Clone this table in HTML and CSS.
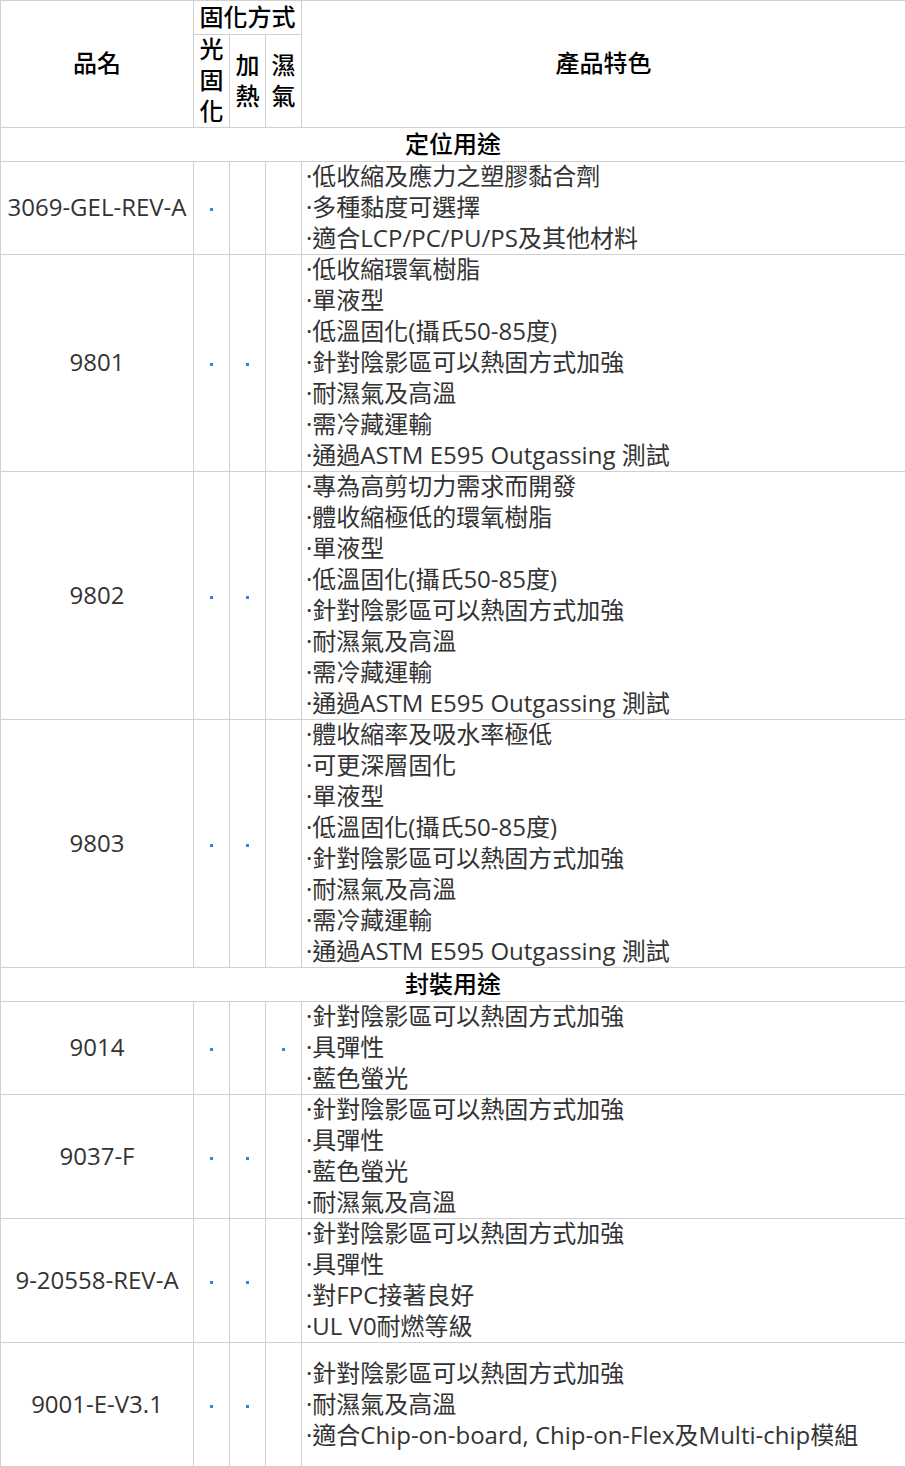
FILE: index.html
```html
<!DOCTYPE html>
<html lang="zh-Hant">

<head>
    <meta charset="UTF-8">
    <meta name="viewport" content="width=device-width, initial-scale=1.0">
    <title>產品特色</title>
    <link rel="stylesheet" href="styles.css">
</head>

<body>
    <table class="spec-table">
        <colgroup>
            <col class="col-name">
            <col class="col-cure">
            <col class="col-cure">
            <col class="col-cure">
            <col class="col-feature">
        </colgroup>
        <thead>
            <tr>
                <th rowspan="2"><div class="lines">品名</div></th>
                <th colspan="3" class="single-row"><div class="lines">固化方式</div></th>
                <th rowspan="2"><div class="lines">產品特色</div></th>
            </tr>
            <tr>
                <th><div class="lines">光固化</div></th>
                <th><div class="lines">加熱</div></th>
                <th><div class="lines">濕氣</div></th>
            </tr>
        </thead>
        <tbody>
            <tr>
                <th colspan="5" class="single-row"><div class="lines">定位用途</div></th>
            </tr>
            <tr>
                <td class="name"><div class="lines">3069-GEL-REV-A</div></td>
                <td class="mark"><div class="lines"><span class="dot"></span></div></td>
                <td class="mark"></td>
                <td class="mark"></td>
                <td class="feature"><div class="lines">
                    ·低收縮及應力之塑膠黏合劑<br>
                    ·多種黏度可選擇<br>
                    ·適合LCP/PC/PU/PS及其他材料
                </div></td>
            </tr>
            <tr>
                <td class="name"><div class="lines">9801</div></td>
                <td class="mark"><div class="lines"><span class="dot"></span></div></td>
                <td class="mark"><div class="lines"><span class="dot"></span></div></td>
                <td class="mark"></td>
                <td class="feature"><div class="lines">
                    ·低收縮環氧樹脂<br>
                    ·單液型<br>
                    ·低溫固化(攝氏50-85度)<br>
                    ·針對陰影區可以熱固方式加強<br>
                    ·耐濕氣及高溫<br>
                    ·需冷藏運輸<br>
                    ·通過ASTM E595 Outgassing 測試
                </div></td>
            </tr>
            <tr>
                <td class="name"><div class="lines">9802</div></td>
                <td class="mark"><div class="lines"><span class="dot"></span></div></td>
                <td class="mark"><div class="lines"><span class="dot"></span></div></td>
                <td class="mark"></td>
                <td class="feature"><div class="lines">
                    ·專為高剪切力需求而開發<br>
                    ·體收縮極低的環氧樹脂<br>
                    ·單液型<br>
                    ·低溫固化(攝氏50-85度)<br>
                    ·針對陰影區可以熱固方式加強<br>
                    ·耐濕氣及高溫<br>
                    ·需冷藏運輸<br>
                    ·通過ASTM E595 Outgassing 測試
                </div></td>
            </tr>
            <tr>
                <td class="name"><div class="lines">9803</div></td>
                <td class="mark"><div class="lines"><span class="dot"></span></div></td>
                <td class="mark"><div class="lines"><span class="dot"></span></div></td>
                <td class="mark"></td>
                <td class="feature"><div class="lines">
                    ·體收縮率及吸水率極低<br>
                    ·可更深層固化<br>
                    ·單液型<br>
                    ·低溫固化(攝氏50-85度)<br>
                    ·針對陰影區可以熱固方式加強<br>
                    ·耐濕氣及高溫<br>
                    ·需冷藏運輸<br>
                    ·通過ASTM E595 Outgassing 測試
                </div></td>
            </tr>
            <tr>
                <th colspan="5" class="single-row"><div class="lines">封裝用途</div></th>
            </tr>
            <tr>
                <td class="name"><div class="lines">9014</div></td>
                <td class="mark"><div class="lines"><span class="dot"></span></div></td>
                <td class="mark"></td>
                <td class="mark"><div class="lines"><span class="dot"></span></div></td>
                <td class="feature"><div class="lines">
                    ·針對陰影區可以熱固方式加強<br>
                    ·具彈性<br>
                    ·藍色螢光
                </div></td>
            </tr>
            <tr>
                <td class="name"><div class="lines">9037-F</div></td>
                <td class="mark"><div class="lines"><span class="dot"></span></div></td>
                <td class="mark"><div class="lines"><span class="dot"></span></div></td>
                <td class="mark"></td>
                <td class="feature"><div class="lines">
                    ·針對陰影區可以熱固方式加強<br>
                    ·具彈性<br>
                    ·藍色螢光<br>
                    ·耐濕氣及高溫
                </div></td>
            </tr>
            <tr>
                <td class="name"><div class="lines">9-20558-REV-A</div></td>
                <td class="mark"><div class="lines"><span class="dot"></span></div></td>
                <td class="mark"><div class="lines"><span class="dot"></span></div></td>
                <td class="mark"></td>
                <td class="feature"><div class="lines">
                    ·針對陰影區可以熱固方式加強<br>
                    ·具彈性<br>
                    ·對FPC接著良好<br>
                    ·UL V0耐燃等級
                </div></td>
            </tr>
            <tr class="tall-row">
                <td class="name"><div class="lines">9001-E-V3.1</div></td>
                <td class="mark"><div class="lines"><span class="dot"></span></div></td>
                <td class="mark"><div class="lines"><span class="dot"></span></div></td>
                <td class="mark"></td>
                <td class="feature"><div class="lines">
                    ·針對陰影區可以熱固方式加強<br>
                    ·耐濕氣及高溫<br>
                    ·適合Chip-on-board, Chip-on-Flex及Multi-chip模組
                </div></td>
            </tr>
        </tbody>
    </table>
</body>

</html>
```

FILE: styles.css
```css
body {
    margin: 0;
    background: #fff;
    font-family: "Open Sans", "Noto Sans CJK TC", sans-serif;
    font-size: 24px;
    color: #333;
}

.spec-table {
    width: 905px;
    border-collapse: collapse;
    table-layout: fixed;
}

.col-name {
    width: 193px;
}

.col-cure {
    width: 36px;
}

.col-feature {
    width: 604px;
}

.spec-table th,
.spec-table td {
    border: 1px solid #d0d0d0;
    padding: 0;
    line-height: 31px;
    vertical-align: middle;
}

.spec-table th {
    color: #000;
    font-weight: 500;
    text-align: center;
}

/* n lines take 31px per row including the shared border,
   text sits 2px higher than plain centering */
.lines {
    margin-top: -2px;
    margin-bottom: 1px;
}

.single-row {
    height: 33px;
}

.name {
    text-align: center;
    white-space: nowrap;
}

.mark {
    text-align: center;
}

.dot {
    display: inline-block;
    width: 3px;
    height: 3px;
    background: #2f86e0;
    vertical-align: middle;
}

.feature {
    padding-left: 4px !important;
    white-space: nowrap;
}

.tall-row td {
    height: 123px;
}
```
